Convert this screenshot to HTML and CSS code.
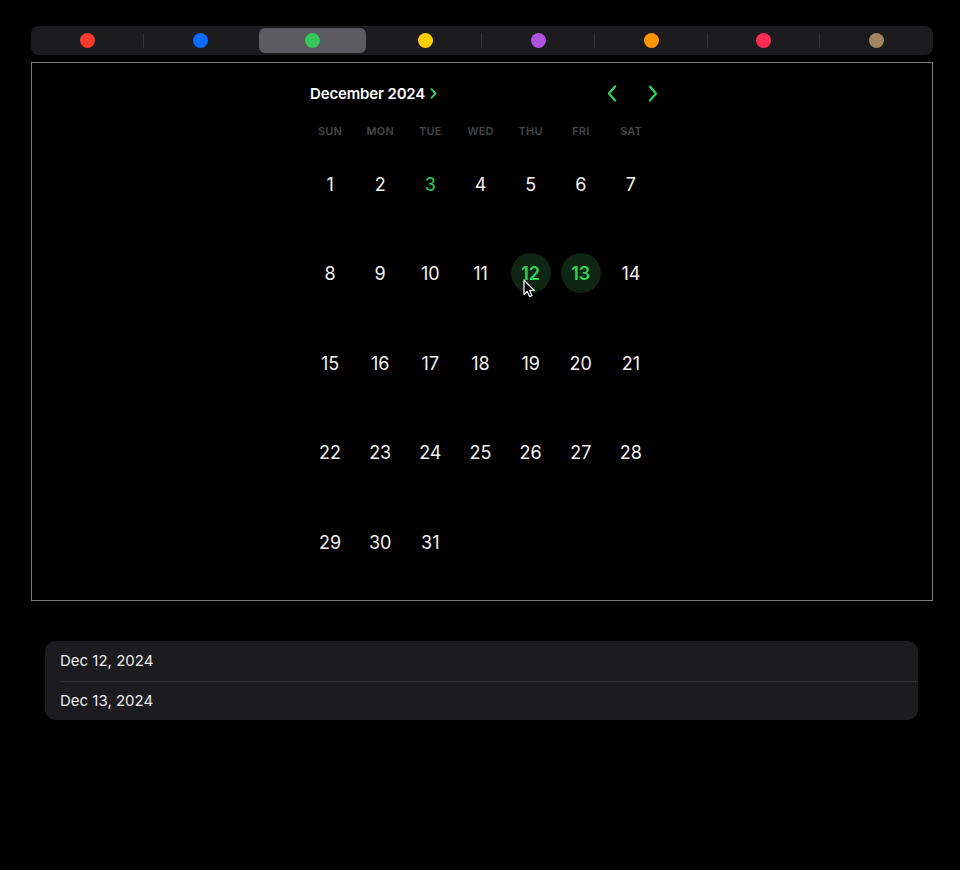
FILE: index.html
```html
<!DOCTYPE html>
<html lang="en">
<head>
<meta charset="utf-8">
<title>Calendar</title>
<link rel="stylesheet" href="styles.css">
</head>
<body>
<div class="page">
  <div class="segmented">
    <div class="seg sep-after"><span class="dot red"></span></div>
    <div class="seg"><span class="dot blue"></span></div>
    <div class="seg selected"><span class="dot green"></span></div>
    <div class="seg sep-after"><span class="dot yellow"></span></div>
    <div class="seg sep-after"><span class="dot purple"></span></div>
    <div class="seg sep-after"><span class="dot orange"></span></div>
    <div class="seg sep-after"><span class="dot pink"></span></div>
    <div class="seg"><span class="dot brown"></span></div>
  </div>

  <div class="cal-box">
    <div class="calendar">
      <div class="cal-header">
        <div class="month">
          <span class="month-label">December 2024</span>
          <svg class="month-chev" width="7" height="11" viewBox="0 0 7 11"><path d="M1.5 1.2 L5.5 5.5 L1.5 9.8" fill="none" stroke="#30d158" stroke-width="1.9" stroke-linecap="round" stroke-linejoin="round"/></svg>
        </div>
        <div class="nav">
          <svg width="10" height="17" viewBox="0 0 10 17"><path d="M8 1.5 L2 8.5 L8 15.5" fill="none" stroke="#30d158" stroke-width="2.3" stroke-linecap="round" stroke-linejoin="round"/></svg>
          <svg width="10" height="17" viewBox="0 0 10 17"><path d="M2 1.5 L8 8.5 L2 15.5" fill="none" stroke="#30d158" stroke-width="2.3" stroke-linecap="round" stroke-linejoin="round"/></svg>
        </div>
      </div>
      <div class="weekdays">
        <span>SUN</span><span>MON</span><span>TUE</span><span>WED</span><span>THU</span><span>FRI</span><span>SAT</span>
      </div>
      <div class="days">
        <div class="day"><span>1</span></div>
        <div class="day"><span>2</span></div>
        <div class="day"><span class="today">3</span></div>
        <div class="day"><span>4</span></div>
        <div class="day"><span>5</span></div>
        <div class="day"><span>6</span></div>
        <div class="day"><span>7</span></div>
        <div class="day"><span>8</span></div>
        <div class="day"><span>9</span></div>
        <div class="day"><span>10</span></div>
        <div class="day"><span>11</span></div>
        <div class="day"><span class="sel">12</span>
          <svg class="cursor" width="13" height="19" viewBox="0 0 13 19"><path d="M1 1 L1 15.5 L4.3 12.4 L6.6 17.6 L8.9 16.6 L6.7 11.5 L11.3 11.5 Z" fill="#000" stroke="#fff" stroke-width="1.2" stroke-linejoin="round"/></svg>
        </div>
        <div class="day"><span class="sel">13</span></div>
        <div class="day"><span>14</span></div>
        <div class="day"><span>15</span></div>
        <div class="day"><span>16</span></div>
        <div class="day"><span>17</span></div>
        <div class="day"><span>18</span></div>
        <div class="day"><span>19</span></div>
        <div class="day"><span>20</span></div>
        <div class="day"><span>21</span></div>
        <div class="day"><span>22</span></div>
        <div class="day"><span>23</span></div>
        <div class="day"><span>24</span></div>
        <div class="day"><span>25</span></div>
        <div class="day"><span>26</span></div>
        <div class="day"><span>27</span></div>
        <div class="day"><span>28</span></div>
        <div class="day"><span>29</span></div>
        <div class="day"><span>30</span></div>
        <div class="day"><span>31</span></div>
      </div>
    </div>
  </div>

  <div class="list">
    <div class="row">Dec 12, 2024</div>
    <div class="row">Dec 13, 2024</div>
  </div>
</div>
</body>
</html>
```

FILE: styles.css
```css
* { box-sizing: border-box; }
html, body {
  margin: 0;
  background: #000;
}
body {
  font-family: Inter, "Noto Sans", "Liberation Sans", sans-serif;
  color: #fff;
}
.page {
  width: 902px;
  margin-left: 31px;
  padding-top: 26px;
}

/* segmented control */
.segmented {
  display: flex;
  height: 29px;
  background: #1c1c1e;
  border-radius: 8px;
  padding: 2px 0;
}
.seg {
  flex: 1 1 0;
  position: relative;
  display: flex;
  align-items: center;
  justify-content: center;
}
.seg.selected::before {
  content: "";
  position: absolute;
  top: 0;
  bottom: 0;
  left: 2px;
  right: 3px;
  border-radius: 6px;
  background: #5c5c60;
}
.seg .dot { position: relative; }
.seg.sep-after::after {
  content: "";
  position: absolute;
  right: 0;
  top: 5px;
  width: 1px;
  height: 15px;
  background: #333336;
}
.dot {
  width: 15px;
  height: 15px;
  border-radius: 50%;
}
.red { background: #ff3b30; }
.blue { background: #0a6cff; }
.green { background: #34c759; }
.yellow { background: #ffcc00; }
.purple { background: #af52de; }
.orange { background: #ff9500; }
.pink { background: #ff2d55; }
.brown { background: #a2845e; }

/* calendar box */
.cal-box {
  margin-top: 7px;
  border: 1px solid #7c7c7c;
  height: 539px;
  padding: 14px 0 0 273px;
}
.calendar {
  width: 351px;
}
.cal-header {
  height: 32px;
  display: flex;
  align-items: center;
  justify-content: space-between;
}
.month {
  display: flex;
  align-items: center;
  gap: 5px;
  padding-left: 5px;
}
.month-label {
  font-size: 15px;
  font-weight: 600;
  letter-spacing: -0.15px;
}
.month-chev { margin-top: 1px; }
.nav {
  display: flex;
  align-items: center;
  gap: 31px;
  margin-right: -2px;
}
.weekdays {
  margin-top: 14px;
  height: 16px;
  display: grid;
  grid-template-columns: repeat(7, 1fr);
  align-items: center;
}
.weekdays span {
  text-align: center;
  font-size: 11px;
  font-weight: 600;
  color: #444447;
  letter-spacing: 0.2px;
}
.days {
  display: grid;
  grid-template-columns: repeat(7, 1fr);
  grid-auto-rows: 89.5px;
}
.day {
  display: flex;
  align-items: center;
  justify-content: center;
  position: relative;
}
.day span {
  width: 40px;
  height: 40px;
  border-radius: 50%;
  display: flex;
  align-items: center;
  justify-content: center;
  font-size: 18px;
  font-weight: 400;
  color: #f2f2f2;
  padding-top: 1px;
}
.day .today {
  color: #30d158;
}
.day .sel {
  background: #0e2514;
  color: #30d158;
  font-weight: 600;
}
.cursor {
  position: absolute;
  left: 17px;
  top: 50px;
}

/* list */
.list {
  margin: 40px 15px 0 14px;
  background: #1c1c1e;
  border-radius: 10px;
  overflow: hidden;
}
.row {
  height: 39.5px;
  display: flex;
  align-items: center;
  padding-left: 15px;
  font-size: 15px;
  color: #ececf0;
  position: relative;
}
.row + .row::before {
  content: "";
  position: absolute;
  left: 15px;
  right: 0;
  top: 0;
  height: 1px;
  background: #2e2e30;
}
```
